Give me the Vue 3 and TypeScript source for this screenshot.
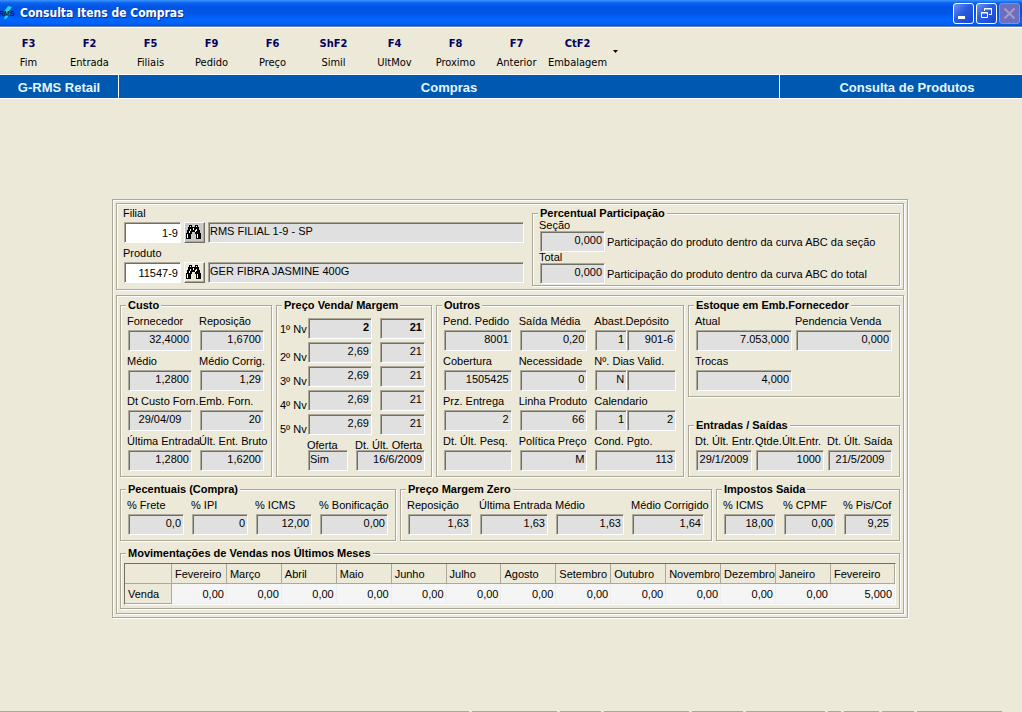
<script setup lang="ts">
import { ref } from 'vue'

interface Field {
  label: string
  values: string[]
  align?: 'center' | 'left'
}
interface Group {
  id: string
  title: string
  fields: Field[]
}

const tools = [
  ['F3', 'Fim'],
  ['F2', 'Entrada'],
  ['F5', 'Filiais'],
  ['F9', 'Pedido'],
  ['F6', 'Preço'],
  ['ShF2', 'Simil'],
  ['F4', 'UltMov'],
  ['F8', 'Proximo'],
  ['F7', 'Anterior'],
  ['CtF2', 'Embalagem'],
]

const lookups = ref([
  { id: 'filial', label: 'Filial', code: '1-9', name: 'RMS FILIAL 1-9 - SP' },
  { id: 'produto', label: 'Produto', code: '11547-9', name: 'GER FIBRA JASMINE 400G' },
])

const shares = [
  { id: 'secao', label: 'Seção', value: '0,000', note: 'Participação do produto dentro da curva ABC da seção' },
  { id: 'total', label: 'Total', value: '0,000', note: 'Participação do produto dentro da curva ABC do total' },
]

const custo: Group = {
  id: 'custo',
  title: 'Custo',
  fields: [
    { label: 'Fornecedor', values: ['32,4000'] },
    { label: 'Reposição', values: ['1,6700'] },
    { label: 'Médio', values: ['1,2800'] },
    { label: 'Médio Corrig.', values: ['1,29'] },
    { label: 'Dt Custo Forn.', values: ['29/04/09'], align: 'center' },
    { label: 'Emb. Forn.', values: ['20'] },
    { label: 'Última Entrada', values: ['1,2800'] },
    { label: 'Últ. Ent. Bruto', values: ['1,6200'] },
  ],
}

const levels = [
  { label: '1º Nv', price: '2', margin: '21' },
  { label: '2º Nv', price: '2,69', margin: '21' },
  { label: '3º Nv', price: '2,69', margin: '21' },
  { label: '4º Nv', price: '2,69', margin: '21' },
  { label: '5º Nv', price: '2,69', margin: '21' },
]

const outros: Group = {
  id: 'outros',
  title: 'Outros',
  fields: [
    { label: 'Pend. Pedido', values: ['8001'] },
    { label: 'Saída Média', values: ['0,20'] },
    { label: 'Abast.Depósito', values: ['1', '901-6'] },
    { label: 'Cobertura', values: ['1505425'] },
    { label: 'Necessidade', values: ['0'] },
    { label: 'Nº. Dias Valid.', values: ['N', ''] },
    { label: 'Prz. Entrega', values: ['2'] },
    { label: 'Linha Produto', values: ['66'] },
    { label: 'Calendario', values: ['1', '2'] },
    { label: 'Dt. Últ. Pesq.', values: [''] },
    { label: 'Política Preço', values: ['M'] },
    { label: 'Cond. Pgto.', values: ['113'] },
  ],
}

const stock: Group[] = [
  {
    id: 'estoque',
    title: 'Estoque em Emb.Fornecedor',
    fields: [
      { label: 'Atual', values: ['7.053,000'] },
      { label: 'Pendencia Venda', values: ['0,000'] },
      { label: 'Trocas', values: ['4,000'] },
    ],
  },
  {
    id: 'entradas',
    title: 'Entradas / Saídas',
    fields: [
      { label: 'Dt. Últ. Entr.', values: ['29/1/2009'], align: 'center' },
      { label: 'Qtde.Últ.Entr.', values: ['1000'] },
      { label: 'Dt. Últ. Saída', values: ['21/5/2009'], align: 'center' },
    ],
  },
]

const rates: Group[] = [
  {
    id: 'percentuais',
    title: 'Pecentuais (Compra)',
    fields: [
      { label: '% Frete', values: ['0,0'] },
      { label: '% IPI', values: ['0'] },
      { label: '% ICMS', values: ['12,00'] },
      { label: '% Bonificação', values: ['0,00'] },
    ],
  },
  {
    id: 'margem',
    title: 'Preço Margem Zero',
    fields: [
      { label: 'Reposição', values: ['1,63'] },
      { label: 'Última Entrada', values: ['1,63'] },
      { label: 'Médio', values: ['1,63'] },
      { label: 'Médio Corrigido', values: ['1,64'] },
    ],
  },
  {
    id: 'impostos',
    title: 'Impostos Saida',
    fields: [
      { label: '% ICMS', values: ['18,00'] },
      { label: '% CPMF', values: ['0,00'] },
      { label: '% Pis/Cof', values: ['9,25'] },
    ],
  },
]

const months = [
  ['Fevereiro', '0,00'],
  ['Março', '0,00'],
  ['Abril', '0,00'],
  ['Maio', '0,00'],
  ['Junho', '0,00'],
  ['Julho', '0,00'],
  ['Agosto', '0,00'],
  ['Setembro', '0,00'],
  ['Outubro', '0,00'],
  ['Novembro', '0,00'],
  ['Dezembro', '0,00'],
  ['Janeiro', '0,00'],
  ['Fevereiro', '5,000'],
]

const statusCells = [469, 86, 41, 85, 51, 79, 13, 35, 32, 85]
</script>

<template>
  <div class="window">
    <header class="titlebar">
      <svg class="logo" width="16" height="16" viewBox="0 0 16 16" aria-hidden="true">
        <path d="M8 1 L12 2 L9 6 L10 9 L6 14 L4 14 L6 9 L4 7 Z" fill="#20d8e0" />
        <text x="-1" y="11" class="mark">RMS</text>
      </svg>
      <h1>Consulta Itens de Compras</h1>
      <div class="controls">
        <button type="button" aria-label="Minimizar">
          <svg width="19" height="19" viewBox="0 0 19 19"><path d="M4 12h7v3H4z" fill="#fff" /></svg>
        </button>
        <button type="button" aria-label="Restaurar">
          <svg width="19" height="19" viewBox="0 0 19 19" fill="none" stroke="#fff">
            <path d="M7.500 7V4.500h7v6H12M7 5h8M4.500 8.500h6v5h-6zM4 9h7" />
          </svg>
        </button>
        <button type="button" class="off" disabled aria-label="Fechar">
          <svg width="19" height="19" viewBox="0 0 19 19"><path d="M4.500 4.500l10 10M14.500 4.500l-10 10" stroke="#a99cc0" stroke-width="2" /></svg>
        </button>
      </div>
    </header>

    <nav class="toolbar">
      <button v-for="[key, name] in tools" :key="key" type="button" class="tool">
        <b>{{ key }}</b>
        <span>{{ name }}</span>
      </button>
      <button type="button" class="more" aria-label="Mais opções">
        <svg width="5" height="3" viewBox="0 0 5 3"><path d="M0 0h5L2.500 3z" fill="#000" /></svg>
      </button>
    </nav>

    <div class="band">
      <strong>G-RMS Retail</strong>
      <strong>Compras</strong>
      <strong>Consulta de Produtos</strong>
    </div>

    <main>
      <div class="panel outer">
        <section class="panel top">
          <div class="lookups">
            <div v-for="item in lookups" :key="item.id" class="lookup">
              <label :for="item.id">{{ item.label }}</label>
              <input :id="item.id" v-model="item.code" class="edit" type="text" />
              <button type="button" class="find" :aria-label="'Procurar ' + item.label">
                <svg width="15" height="14" viewBox="0 0 15 14" aria-hidden="true">
                  <path d="M3 0h3v2h3V0h3v2h1v3h1v3h1v6h-5V9H9V7H6v2H5v5H0V8h1V5h1V2h1z" fill="#000" />
                  <path d="M4 1h1v1H4zM10 1h1v1h-1zM4 4h1v2H4zM3 6h1v2H3zM1 9h1v4H1zM10 4h1v2h-1zM9 5h1v2H9zM11 9h1v4h-1zM7 3h1v2H7z" fill="#fff" />
                </svg>
              </button>
              <input class="value left" type="text" readonly :value="item.name" :aria-label="'Nome ' + item.label" />
            </div>
          </div>
          <fieldset class="share">
            <legend>Percentual Participação</legend>
            <template v-for="s in shares" :key="s.id">
              <label :for="s.id" class="tight">{{ s.label }}</label>
              <div class="share-row">
                <input :id="s.id" class="value" type="text" readonly :value="s.value" />
                <span>{{ s.note }}</span>
              </div>
            </template>
          </fieldset>
        </section>

        <section class="panel body">
          <div class="row main-row">
            <fieldset class="fields custo">
              <legend>{{ custo.title }}</legend>
              <div class="grid">
                <div v-for="(f, i) in custo.fields" :key="i" class="field">
                  <label :for="custo.id + i">{{ f.label }}</label>
                  <input :id="custo.id + i" class="value" :class="f.align" type="text" readonly :value="f.values[0]" />
                </div>
              </div>
            </fieldset>

            <fieldset class="prices">
              <legend>Preço Venda/ Margem</legend>
              <div v-for="(l, i) in levels" :key="i" class="level" :class="{ strong: i === 0 }">
                <label :for="'nivel' + i">{{ l.label }}</label>
                <input :id="'nivel' + i" class="value" type="text" readonly :value="l.price" />
                <input class="value" type="text" readonly :value="l.margin" :aria-label="'Margem ' + l.label" />
              </div>
              <div class="offer">
                <div class="field">
                  <label for="oferta" class="tight">Oferta</label>
                  <input id="oferta" class="value left" type="text" readonly value="Sim" />
                </div>
                <div class="field">
                  <label for="dt-oferta" class="tight">Dt. Últ. Oferta</label>
                  <input id="dt-oferta" class="value" type="text" readonly value="16/6/2009" />
                </div>
              </div>
            </fieldset>

            <fieldset class="fields outros">
              <legend>{{ outros.title }}</legend>
              <div class="grid">
                <div v-for="(f, i) in outros.fields" :key="i" class="field">
                  <label :for="outros.id + i">{{ f.label }}</label>
                  <div class="pair" :class="{ split: f.values.length > 1 }">
                    <input
                      v-for="(v, n) in f.values"
                      :id="n ? undefined : outros.id + i"
                      :key="n"
                      class="value"
                      type="text"
                      readonly
                      :value="v"
                      :aria-label="n ? f.label : undefined"
                    />
                  </div>
                </div>
              </div>
            </fieldset>

            <div class="stock">
              <fieldset v-for="g in stock" :key="g.id" class="fields" :class="g.id">
                <legend>{{ g.title }}</legend>
                <div class="grid">
                  <div v-for="(f, i) in g.fields" :key="i" class="field">
                    <label :for="g.id + i">{{ f.label }}</label>
                    <input :id="g.id + i" class="value" :class="f.align" type="text" readonly :value="f.values[0]" />
                  </div>
                </div>
              </fieldset>
            </div>
          </div>

          <div class="row rate-row">
            <fieldset v-for="g in rates" :key="g.id" class="fields" :class="g.id">
              <legend>{{ g.title }}</legend>
              <div class="grid">
                <div v-for="(f, i) in g.fields" :key="i" class="field">
                  <label :for="g.id + i">{{ f.label }}</label>
                  <input :id="g.id + i" class="value" type="text" readonly :value="f.values[0]" />
                </div>
              </div>
            </fieldset>
          </div>

          <fieldset class="sales">
            <legend>Movimentações de Vendas nos Últimos Meses</legend>
            <table>
              <thead>
                <tr>
                  <th class="head"></th>
                  <th v-for="(m, i) in months" :key="i" scope="col">{{ m[0] }}</th>
                </tr>
              </thead>
              <tbody>
                <tr>
                  <th scope="row">Venda</th>
                  <td v-for="(m, i) in months" :key="i">{{ m[1] }}</td>
                </tr>
              </tbody>
            </table>
          </fieldset>
        </section>
      </div>
    </main>

    <footer class="status">
      <span v-for="(w, i) in statusCells" :key="i" :style="{ flexGrow: w }"></span>
    </footer>
  </div>
</template>

<style>
body {
  margin: 0;
  background: #ece9d8;
}
</style>

<style scoped>
.window {
  display: flex;
  flex-direction: column;
  min-height: 100vh;
  background: #ece9d8;
  color: #000;
  font: 11px/16px "Liberation Sans", Arial, sans-serif;
}
.window *,
.window {
  box-sizing: border-box;
}
button,
input {
  margin: 0;
  font: inherit;
  color: inherit;
}

.titlebar {
  display: flex;
  align-items: center;
  height: 27px;
  padding-right: 2px;
  background: linear-gradient(#3a95ff 0, #0a62ee 3px, #0054e3 7px, #0055e6 13px, #0066ff 20px, #0061f5 24px, #0042b8 27px);
  border-bottom: 1px solid #6b86b8;
}
.logo {
  flex: none;
}
.mark {
  fill: #06184e;
  font: bold 7px "Liberation Sans", Arial, sans-serif;
}
h1 {
  flex: 1;
  margin: 0;
  padding-left: 4px;
  color: #fff;
  font: bold 12px/20px "DejaVu Sans Condensed", "DejaVu Sans", sans-serif;
  text-shadow: 1px 1px 0 #0a2f8f;
}
.controls {
  display: flex;
  gap: 2px;
}
.controls button {
  width: 21px;
  height: 21px;
  padding: 0;
  border: 1px solid #fff;
  border-radius: 3px;
  background: linear-gradient(135deg, #6f93f2, #2a5be0 45%, #1746cf);
}
.controls svg {
  display: block;
}
.controls .off {
  border-color: #8290d8;
  background: #6c6fbf;
}

.toolbar {
  display: flex;
  height: 47px;
  margin-left: -2px;
  border-top: 1px solid #fff;
}
.tool {
  display: flex;
  flex-direction: column;
  align-items: center;
  width: 61px;
  padding: 6px 0 0;
  border: 0;
  background: none;
  font: 11px/19px "DejaVu Sans Condensed", "DejaVu Sans", sans-serif;
}
.tool b {
  color: #000060;
}
.more {
  display: flex;
  align-items: center;
  justify-content: center;
  width: 14px;
  padding: 0;
  border: 0;
  background: none;
}

.band {
  display: grid;
  grid-template-columns: 118px 1fr 243px;
  height: 25px;
  border: solid #fff;
  border-width: 1px 0;
  background: #0058b0;
  color: #e4f6ff;
  font-size: 13px;
  line-height: 25px;
  text-align: center;
}
.band strong + strong {
  border-left: 1px solid #fff;
}
.band strong:last-child {
  padding-left: 12px;
}

main {
  flex: 1;
  padding: 100px 114px 24px 112px;
}
.panel,
fieldset {
  border: 1px solid #aca899;
  box-shadow: 1px 1px 0 #fff, inset 1px 1px 0 #fff;
}
.outer {
  display: flex;
  flex-direction: column;
  gap: 5px;
  padding: 3px;
}
.top {
  display: grid;
  grid-template-columns: 404fr 368fr;
  gap: 8px;
  padding: 2px 3px 3px;
}
.body {
  display: flex;
  flex-direction: column;
  gap: 5px;
  padding: 2px 3px 4px;
}
fieldset {
  min-width: 0;
  margin: 0;
  padding: 1px 7px 5px;
}
legend {
  height: 15px;
  margin-left: -2px;
  padding: 0 2px;
  background: #ece9d8;
  font-size: 11px;
  font-weight: bold;
  line-height: 15px;
  white-space: nowrap;
}
label {
  display: block;
  height: 16px;
  margin-left: -1px;
  line-height: 14px;
  white-space: nowrap;
}
label.tight {
  height: 10px;
  line-height: 10px;
}
.edit,
.value {
  display: block;
  width: 100%;
  min-width: 0;
  height: 21px;
  padding: 0 2px;
  border: 1px solid;
  border-color: #aca899 #fff #fff #aca899;
  border-radius: 0;
  outline: 0;
  box-shadow: inset 1px 1px 0 #716f64;
  text-align: right;
}
.edit {
  background: #fff;
}
.value {
  padding: 0 2px 3px;
  background: #e0e0e0;
}
.value.center {
  text-align: center;
}
.value.left {
  padding-left: 1px;
  text-align: left;
}

.lookups {
  display: flex;
  flex-direction: column;
  gap: 3px;
  min-width: 0;
  padding-left: 4px;
}
.lookup {
  display: grid;
  grid-template-columns: 57px 21px 1fr;
  column-gap: 3px;
}
.lookup label {
  grid-column: 1 / -1;
}
.find {
  display: flex;
  align-items: center;
  justify-content: center;
  height: 21px;
  padding: 0 2px 1px 0;
  border: 1px solid;
  border-color: #fff #716f64 #716f64 #fff;
  background: #ece9d8;
  box-shadow: inset -1px -1px 0 #aca899;
}
.lookup:first-child .find {
  background: #c8c8c8;
}
.find svg {
  flex: none;
}
.share {
  padding: 0 7px 1px;
}
.share legend {
  height: 14px;
}
.share label.tight {
  height: 11px;
}
.share-row {
  display: flex;
  align-items: center;
  gap: 2px;
}
.share-row .value {
  width: 65px;
}
.share-row span {
  white-space: nowrap;
}

.row {
  display: grid;
  gap: 4px;
}
.main-row {
  grid-template-columns: 152fr 156fr 248fr 212fr;
}
.rate-row {
  grid-template-columns: 276fr 312fr 184fr;
}
.grid {
  display: grid;
  gap: 3px 8px;
}
.field {
  min-width: 0;
}
.custo .grid {
  grid-template-columns: 1fr 1fr;
}
.outros .grid {
  grid-template-columns: 68fr 68fr 81fr;
}
.pair.split {
  display: grid;
  grid-template-columns: 32fr 49fr;
}
.stock {
  display: flex;
  flex-direction: column;
  justify-content: space-between;
  min-width: 0;
}
.estoque .grid {
  grid-template-columns: 1fr 1fr;
  column-gap: 4px;
}
.entradas .grid {
  grid-template-columns: 56fr 68fr 64fr;
  column-gap: 4px;
}
.percentuais .grid {
  grid-template-columns: 56fr 56fr 56fr 68fr;
}
.margem .grid {
  grid-template-columns: 64fr 68fr 68fr 72fr;
}
.impostos .grid {
  grid-template-columns: 52fr 52fr 48fr;
}

.prices {
  padding: 5px 6px 5px 3px;
}
.prices legend {
  margin-left: 2px;
}
.level {
  display: grid;
  grid-template-columns: 28px 64fr 53fr;
  margin-bottom: 3px;
}
.level label {
  margin: 0;
  padding-top: 8px;
}
.level.strong label {
  padding-top: 4px;
}
.level input:last-child {
  margin-left: 8px;
  width: calc(100% - 8px);
}
.strong input {
  font-weight: bold;
}
.offer {
  display: grid;
  grid-template-columns: 40fr 69fr;
  gap: 8px;
  padding: 2px 0 0 28px;
}

.sales {
  padding: 2px 3px 3px;
}
.sales legend {
  margin-left: 2px;
}
table {
  width: 100%;
  table-layout: fixed;
  border: 1px solid;
  border-color: #716f64 #fff #fff #716f64;
  border-spacing: 0;
}
th,
td {
  height: 20px;
  padding: 0 2px 0 3px;
  border: solid #aca899;
  border-width: 0 1px 1px 0;
  font-weight: normal;
  text-align: left;
  white-space: nowrap;
}
.head {
  width: 47px;
}
thead th:last-child {
  width: 64px;
}
td {
  border-color: #ededed;
  background: #f5f5f5;
  text-align: right;
}

.status {
  display: flex;
  gap: 3px;
  padding-right: 20px;
}
.status span {
  flex: 1 1 0;
  height: 1px;
  background: #aca899;
}
</style>
